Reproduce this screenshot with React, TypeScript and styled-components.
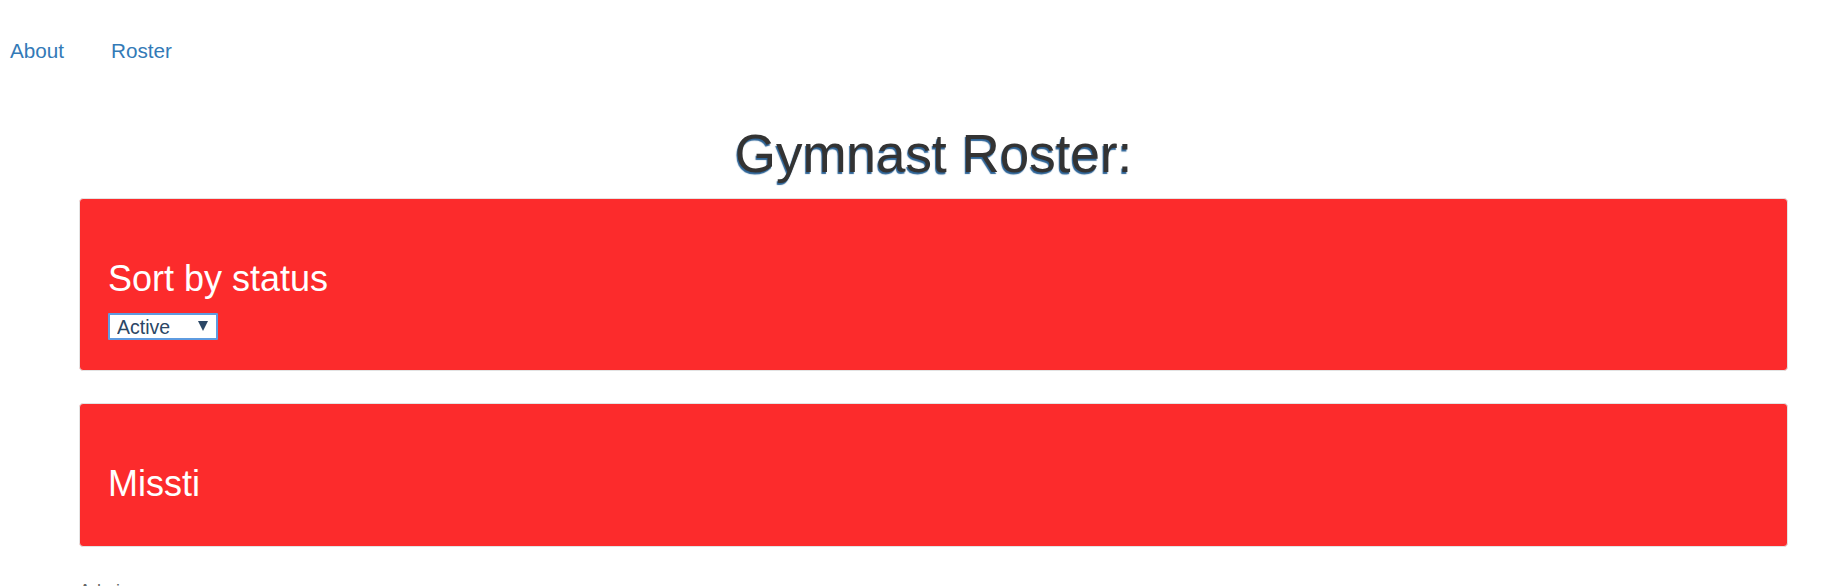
import React from "react";
import styled, { createGlobalStyle } from "styled-components";

const Global = createGlobalStyle`
  html, body { margin: 0; padding: 0; background: #fff; }
  body { font-family: "Liberation Sans", Arial, sans-serif; color: #333; }
`;

const Page = styled.div`
  display: flex;
  flex-direction: column;
`;

const Nav = styled.nav`
  display: flex;
  gap: 47px;
  padding: 36px 0 0 10px;
  height: 30px;
`;

const NavLink = styled.a`
  font-size: 20.7px;
  line-height: 30px;
  color: #337ab7;
  text-decoration: none;
`;

const Container = styled.main`
  margin: 59px 53px 0 79px;
  display: flex;
  flex-direction: column;
`;

const Title = styled.h1`
  margin: 0 0 15px;
  text-align: center;
  font-size: 53px;
  line-height: 58px;
  font-weight: 400;
  color: #333;
  text-shadow: -1px 2px 1px #2d6396;
`;

const Well = styled.section`
  background: #fc2b2c;
  border: 1px solid #e3e3e3;
  border-radius: 4px;
  padding: 28px;
  margin-bottom: 32px;
  color: #fff;
`;

const WellTitle = styled.h2`
  margin: 32px 0 14px;
  font-size: 36px;
  line-height: 40px;
  font-weight: 400;
  color: #fff;
`;

const SelectWrap = styled.div`
  position: relative;
  width: 110px;
  height: 27px;
  margin-bottom: 2px;
`;

const Select = styled.select`
  appearance: none;
  -webkit-appearance: none;
  width: 110px;
  height: 27px;
  box-sizing: border-box;
  border: 2px solid #5e9be0;
  border-radius: 1px;
  background: #fff;
  padding: 0 0 0 7px;
  font-family: "Liberation Sans", Arial, sans-serif;
  font-size: 19.5px;
  color: #2b4766;
  outline: none;
`;

const Arrow = styled.span`
  position: absolute;
  right: 10px;
  top: 8px;
  width: 0;
  height: 0;
  border-left: 5px solid transparent;
  border-right: 5px solid transparent;
  border-top: 10px solid #2b4766;
  pointer-events: none;
`;

const Footer = styled.div`
  margin-top: 2px;
  font-size: 18px;
  line-height: 20px;
  color: #666;
`;

export default function App() {
  return (
    <Page>
      <Global />
      <Nav>
        <NavLink href="#">About</NavLink>
        <NavLink href="#">Roster</NavLink>
      </Nav>
      <Container>
        <Title>Gymnast Roster:</Title>
        <Well>
          <WellTitle>Sort by status</WellTitle>
          <SelectWrap>
            <Select defaultValue="Active">
              <option>Active</option>
              <option>Inactive</option>
            </Select>
            <Arrow />
          </SelectWrap>
        </Well>
        <Well>
          <WellTitle>Missti</WellTitle>
        </Well>
        <Footer>Admin</Footer>
      </Container>
    </Page>
  );
}
